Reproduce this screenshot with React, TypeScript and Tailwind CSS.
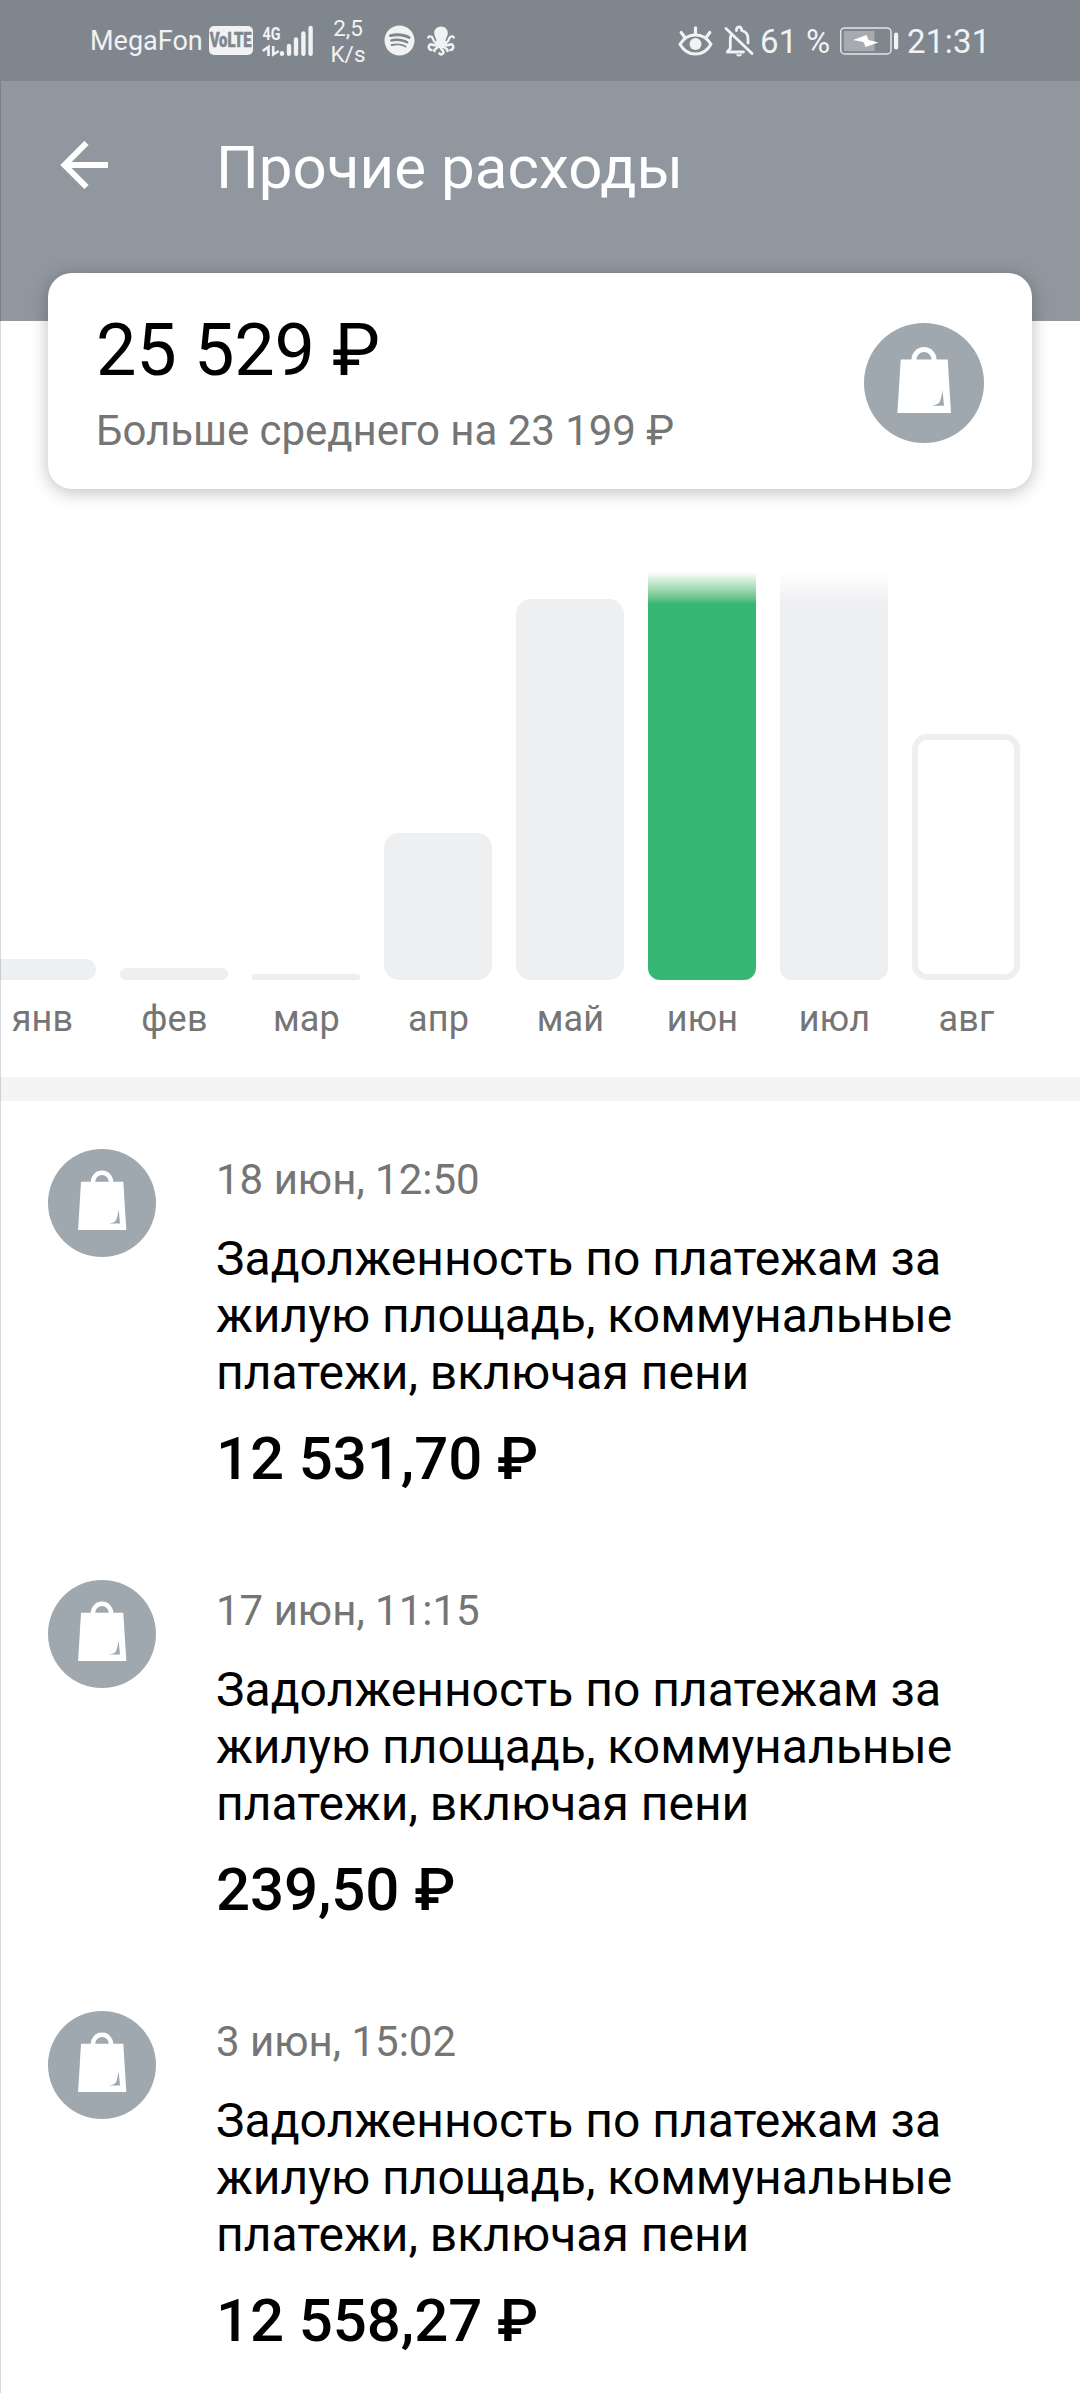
import React from "react";
import { FaSpotify } from "react-icons/fa";

function SignalIcon() {
  return (
    <svg className="ml-[6px] h-10 w-[54px] shrink-0 overflow-visible" viewBox="259 20 54 40">
      <text x="262.5" y="38.5" fontSize="17.5" fontWeight="700" fontFamily="Roboto, sans-serif" fill="#f0f2f3" textLength="18" lengthAdjust="spacingAndGlyphs">4G</text>
      <path d="M262.800 49.800 268.500 46V55" fill="none" stroke="#f0f2f3" strokeWidth="2.600" />
      <path d="M273.200 45V53.500L278.800 50" fill="none" stroke="#f0f2f3" strokeWidth="2.600" />
      <g stroke="#f0f2f3" strokeWidth="4.4" strokeLinecap="round">
        <path d="M282 52.2V52.8M289 45V52.8M296 38.5V52.8M303.4 32.5V52.8M310.6 27V52.8" />
      </g>
    </svg>
  );
}

function OctopusIcon() {
  return (
    <svg className="ml-[12px] h-[30px] w-7 shrink-0" viewBox="0 0 28 30" fill="none" stroke="#f0f2f3" strokeLinecap="round" strokeLinejoin="round">
      <path d="M14 .5C9.700 .5 7.200 3.500 7.200 7c0 3.200 2 4.800 2.300 8l-2 3.500 3.500 3.500h6l3.500-3.500-2-3.500c.3-3.200 2.300-4.800 2.300-8C20.800 3.500 18.300.5 14 .5Z" fill="#f0f2f3" stroke="none" />
      <path d="M11 16.500C6 18 7 12.500 4.500 10.800 3.500 10 1.800 10.200 1.200 11.500M17 16.500c5 1.500 4-4 6.500-5.700 1-.8 2.700-.6 3.300.7" strokeWidth="2.300" />
      <path d="M11 18C7.500 21.500 4.500 16.500 2.500 19c-1.500 2-.3 5 2 5M17 18c3.500 3.500 6.500-1.500 8.500 1 1.500 2 .3 5-2 5" strokeWidth="2.600" />
      <path d="M12 19.500C10.500 23 7 22 7.500 25M16 19.500c1.500 3.500 5 2.500 4.500 5.500M14 20c-1.500 3.500 2.500 3.500 2.500 6.300 0 2.200-3 2.800-4 1" strokeWidth="2.600" />
    </svg>
  );
}

function EyeIcon() {
  return (
    <svg className="h-8 w-[35px] shrink-0" viewBox="678 24 35 32" fill="none" stroke="#f0f2f3" strokeLinecap="round">
      <path d="M680 43.2C684 36.800 689.500 34 695.500 34S707 36.800 711 43.200C707 50.200 701.500 53 695.500 53S684 50.200 680 43.200Z" strokeWidth="3" strokeLinejoin="round" />
      <circle cx="695.500" cy="43" r="6" fill="#f0f2f3" stroke="none" />
      <path d="M695.500 26.800V33M681.200 31.500l3 4M709.800 31.500l-3 4" strokeWidth="3.200" />
    </svg>
  );
}

function BellOffIcon() {
  return (
    <svg className="ml-[11px] h-8 w-[30px] shrink-0" viewBox="724 24 30 32" fill="none" stroke="#f0f2f3" strokeLinecap="round" strokeLinejoin="round">
      <path d="M726 27.500 752 52.500" strokeWidth="2.800" />
      <path d="M743.500 51H727.300L730.300 47.300V37.500C730.300 36 730.700 35 731.300 34" strokeWidth="2.800" />
      <path d="M736.500 29.500C736.300 27.300 737.300 26 739 26s2.800 1.300 2.600 3.500C745.800 30.500 748 33.500 748 37.500V42" strokeWidth="2.800" />
      <path d="M736 53.300h6c-.3 1.400-1.500 2.200-3 2.200s-2.700-.8-3-2.200Z" fill="#f0f2f3" stroke="none" />
    </svg>
  );
}

function BatteryIcon() {
  return (
    <svg className="h-7 w-[59px] shrink-0" viewBox="840 26.500 59 28">
      <rect x="840.700" y="27.400" width="50.300" height="26" rx="4" fill="none" stroke="#e2e5e7" strokeWidth="1.500" />
      <rect x="844" y="30.500" width="30.500" height="20" fill="#a7abb0" />
      <rect x="894" y="32" width="4.200" height="17" rx="2" fill="#f0f2f3" />
      <path d="M853 39.500 866.500 34.500 868.500 39.500 878.500 42 865.500 46.500 863.500 41.500Z" fill="#fff" />
    </svg>
  );
}

function StatusBar() {
  return (
    <div className="flex h-[81px] items-center bg-[#80868d] text-[#f0f2f3]">
      <div className="flex flex-1 items-center pl-[90px]">
        <span className="mt-[2px] w-[119px] text-[27px] leading-none whitespace-nowrap">MegaFon</span>
        <span className="flex h-[29px] w-11 shrink-0 items-center justify-center rounded-[5px] bg-[#f0f2f3] text-[#80868d]">
          <span className="scale-x-[0.76] text-[19.5px] leading-[22px] font-black [-webkit-text-stroke:0.5px_#80868d]">VoLTE</span>
        </span>
        <SignalIcon />
        <span className="ml-[17px] w-9 text-center text-[22.500px] leading-[26px] whitespace-nowrap">2,5<br />K/s</span>
        <FaSpotify className="ml-[18px] size-[31px] shrink-0" />
        <OctopusIcon />
      </div>
      <div className="flex w-[402px] items-center">
        <EyeIcon />
        <BellOffIcon />
        <span className="mt-px ml-[6px] w-[80px] text-[33px] leading-[39px] tracking-[0.2px] whitespace-nowrap">61 %</span>
        <BatteryIcon />
        <span className="mt-px ml-2 text-[33px] leading-[39px] tracking-[0.3px] whitespace-nowrap">21:31</span>
      </div>
    </div>
  );
}

function BagBadge({ className }: { className: string }) {
  return (
    <svg className={className} viewBox="0 0 120 120">
      <circle cx="60" cy="60" r="60" fill="#a0a8af" />
      <path d="M50 38V36.500a10 10 0 0 1 20 0V38" fill="none" stroke="#fff" strokeWidth="5" />
      <path d="M36.700 36.500H83.700L87 90H33.400Z" fill="#fff" />
      <path d="M78.500 67 80 82.700H68.300C73.500 81.500 75.300 80.500 76 78 77.200 74.500 78 71 78.500 67Z" fill="#a0a8af" />
    </svg>
  );
}

const months = [
  { label: "янв", bar: "h-[21px] rounded-[10px] bg-[#eeeff1]" },
  { label: "фев", bar: "h-3 rounded-[6px] bg-[#eeeff1]" },
  { label: "мар", bar: "h-1.5 rounded-[3px] bg-[#eeeff1]" },
  { label: "апр", bar: "h-[147px] rounded-[15px] bg-[#eeeff1]" },
  { label: "май", bar: "h-[381px] rounded-[15px] bg-[#eeeff1]" },
  { label: "июн", bar: "h-[408px] rounded-b-xl bg-linear-to-b from-white to-[#36b771] to-[32px]" },
  { label: "июл", bar: "h-[408px] rounded-b-xl bg-linear-to-b from-white to-[#eeeff1] to-[32px]" },
  { label: "авг", bar: "h-[246px] rounded-[15px] border-6 border-[#eeeff1]" },
];

const operations = [
  { date: "18 июн, 12:50", amount: "12 531,70 ₽" },
  { date: "17 июн, 11:15", amount: "239,50 ₽" },
  { date: "3 июн, 15:02", amount: "12 558,27 ₽" },
];

export default function App() {
  return (
    <div className="relative h-[2393px] w-[1080px] overflow-hidden bg-white font-[Roboto,sans-serif] text-black">
      <StatusBar />
      <header className="flex h-60 items-start bg-[#90979e] text-white">
        <svg className="mt-[60px] ml-[60px] h-12 w-12 shrink-0" viewBox="0 0 48 48" fill="none" stroke="#fff" strokeWidth="6">
          <path d="M48 24H5M26.500 2 4.500 24l22 22" />
        </svg>
        <h1 className="mt-[52px] ml-[108px] text-[60px] leading-[70px] tracking-[0.05px]">Прочие расходы</h1>
      </header>

      <section className="relative mx-12 -mt-12 flex h-[216px] items-center justify-between rounded-3xl bg-white px-12 shadow-[0_3px_18px_rgba(0,0,0,0.26)]">
        <div>
          <div className="mt-px text-[72px] leading-[84px] tracking-[-0.25px]">25 529 ₽</div>
          <div className="mt-[14px] text-[42px] leading-[48px] tracking-[-0.05px] text-[#757575]">Больше среднего на 23 199 ₽</div>
        </div>
        <BagBadge className="mt-1 size-[120px]" />
      </section>

      <section className="-ml-3 flex h-[588px] w-[1032px] items-start gap-6">
        {months.map((m) => (
          <div key={m.label} className="flex w-[108px] shrink-0 flex-col items-center">
            <div className="flex h-[491px] w-full items-end">
              <div className={`w-full ${m.bar}`} />
            </div>
            <div className="mt-[18px] pl-px text-[36px] leading-[42px] tracking-[0.2px] text-[#757575]">{m.label}</div>
          </div>
        ))}
      </section>

      <div className="h-6 bg-[#f4f4f4]" />

      <main className="pt-12">
        {operations.map((op) => (
          <article key={op.date} className="flex h-[431px] items-start pl-12">
            <BagBadge className="size-[108px] shrink-0" />
            <div className="ml-[60px] w-[780px]">
              <div className="mt-[7px] text-[42px] leading-[48px] text-[#757575]">{op.date}</div>
              <p className="mt-[26px] text-[48px] leading-[57px] tracking-[0.015px]">Задолженность по платежам за жилую площадь, коммунальные платежи, включая пени</p>
              <div className="mt-[23px] text-[60px] leading-[70px] font-medium tracking-[-0.1px]">{op.amount}</div>
            </div>
          </article>
        ))}
      </main>

      <div className="absolute top-[81px] bottom-0 left-0 w-px bg-black/15" />
    </div>
  );
}
